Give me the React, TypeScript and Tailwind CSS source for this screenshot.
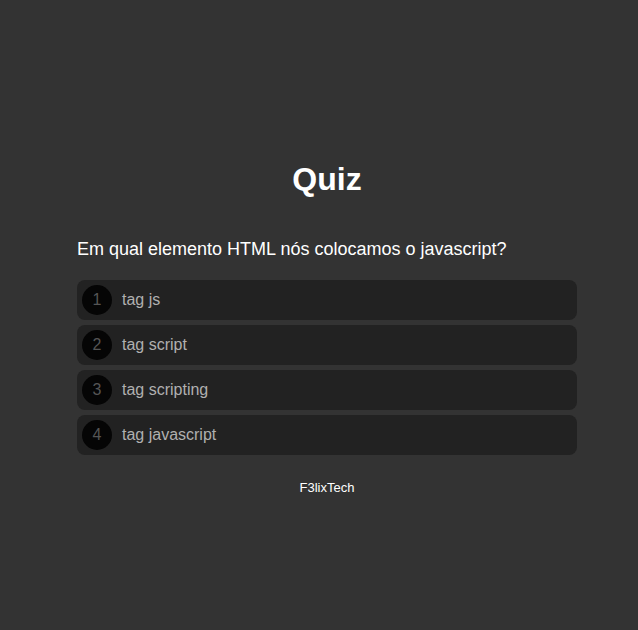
import React from 'react';

const options = ['tag js', 'tag script', 'tag scripting', 'tag javascript'];

export default function App() {
  return (
    <div className="min-h-screen bg-[#333333] font-['Liberation_Sans',Arial,sans-serif] flex flex-col items-center pt-[161px] pl-[16px]">
      <div className="w-[500px]">
        <h1 className="text-center text-[32px] leading-[37px] font-bold text-white">Quiz</h1>
        <p className="mt-[41px] text-[18px] leading-[21px] text-white">
          Em qual elemento HTML nós colocamos o javascript?
        </p>
        <ul className="mt-[20px] flex flex-col gap-[5px]">
          {options.map((opt, i) => (
            <li key={opt} className="h-[40px] flex items-center bg-[#222222] rounded-[8px] px-[5px]">
              <span className="w-[30px] h-[30px] rounded-full bg-[#050505] flex items-center justify-center text-[16px] text-[#555555]">
                {i + 1}
              </span>
              <span className="ml-[10px] text-[16px] text-[#b0b0b0]">{opt}</span>
            </li>
          ))}
        </ul>
        <p className="mt-[25px] text-center text-[13px] leading-[15px] text-white">F3lixTech</p>
      </div>
    </div>
  );
}
